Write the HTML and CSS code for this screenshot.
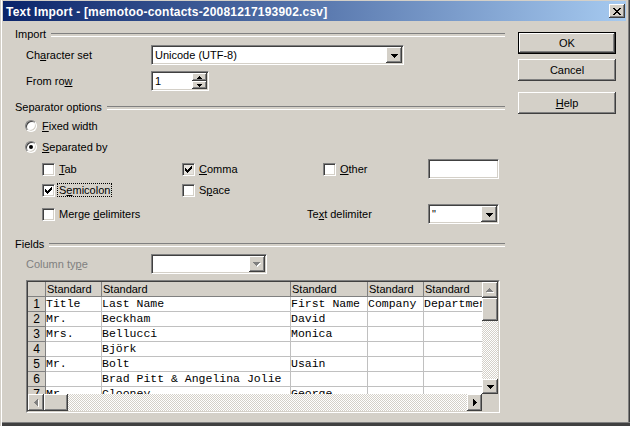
FILE: index.html
```html
<!DOCTYPE html>
<html>
<head>
<meta charset="utf-8">
<title>Text Import</title>
<link rel="stylesheet" href="styles.css">
</head>
<body>
<div class="window">
  <div class="titlebar">
    <span class="title">Text Import - [memotoo-contacts-20081217193902.csv]</span>
    <span class="cap-btn"><svg width="8" height="7" viewBox="0 0 8 7"><path d="M0 0h2v1h-2z M6 0h2v1h-2z M1 1h2v1h-2z M5 1h2v1h-2z M2 2h4v1h-4z M3 3h2v1h-2z M2 4h4v1h-4z M1 5h2v1h-2z M5 5h2v1h-2z M0 6h2v1h-2z M6 6h2v1h-2z"/></svg></span>
  </div>
  <div class="client">
    <div class="main">
      <div class="ghead g-import"><span>Import</span></div>
      <div class="row r-charset">
        <span class="lbl">Ch<u>a</u>racter set</span>
        <div class="field combo combo-charset">
          <span class="combo-text">Unicode (UTF-8)</span>
          <span class="drop"><svg width="7" height="4" viewBox="0 0 7 4"><path d="M0 0h7v1h-1v1h-1v1h-1v1h-1v-1h-1v-1h-1v-1h-1z"/></svg></span>
        </div>
      </div>
      <div class="row r-from">
        <span class="lbl">From ro<u>w</u></span>
        <div class="field spin">
          <span class="combo-text">1</span>
          <span class="spin-btns">
            <span class="spin-btn"><svg width="5" height="3" viewBox="0 0 5 3"><path d="M2 0h1v1h1v1h1v1h-5v-1h1v-1h1z"/></svg></span>
            <span class="spin-btn"><svg width="5" height="3" viewBox="0 0 5 3"><path d="M0 0h5v1h-1v1h-1v1h-1v-1h-1v-1h-1z"/></svg></span>
          </span>
        </div>
      </div>

      <div class="ghead g-sep"><span>Separator options</span></div>
      <div class="row r-fixed">
        <span class="radio"></span><span class="opt-text"><u>F</u>ixed width</span>
      </div>
      <div class="row r-sepby">
        <span class="radio on"></span><span class="opt-text"><u>S</u>eparated by</span>
      </div>
      <div class="row r-checks1 indent">
        <div class="cell c1"><span class="check"></span><span class="opt-text2"><u>T</u>ab</span></div>
        <div class="cell c2"><span class="check on hot"><svg width="7" height="7" viewBox="0 0 7 7"><path d="M6 0h1v1h-1z M5 1h2v1h-2z M0 2h1v1h-1z M4 2h3v1h-3z M0 3h2v1h-2z M3 3h3v1h-3z M0 4h5v1h-5z M1 5h3v1h-3z M2 6h1v1h-1z"/></svg></span><span class="opt-text2"><u>C</u>omma</span></div>
        <div class="cell c3"><span class="check"></span><span class="opt-text2"><u>O</u>ther</span></div>
        <div class="field textbox"></div>
      </div>
      <div class="row r-checks2 indent">
        <div class="cell c1"><span class="check on"><svg width="7" height="7" viewBox="0 0 7 7"><path d="M6 0h1v1h-1z M5 1h2v1h-2z M0 2h1v1h-1z M4 2h3v1h-3z M0 3h2v1h-2z M3 3h3v1h-3z M0 4h5v1h-5z M1 5h3v1h-3z M2 6h1v1h-1z"/></svg></span><span class="opt-text2 focus">S<u>e</u>micolon</span></div>
        <div class="cell c2"><span class="check"></span><span class="opt-text2">S<u>p</u>ace</span></div>
      </div>
      <div class="row r-merge indent">
        <div class="cell c-merge"><span class="check"></span><span class="opt-text2">Merge <u>d</u>elimiters</span></div>
        <span class="delim-lbl">Te<u>x</u>t delimiter</span>
        <div class="field combo combo-delim">
          <span class="combo-text">"</span>
          <span class="drop"><svg width="7" height="4" viewBox="0 0 7 4"><path d="M0 0h7v1h-1v1h-1v1h-1v1h-1v-1h-1v-1h-1v-1h-1z"/></svg></span>
        </div>
      </div>

      <div class="ghead g-fields"><span>Fields</span></div>
      <div class="row r-coltype">
        <span class="lbl disabled">Column ty<u>p</u>e</span>
        <div class="field combo combo-coltype">
          <span class="combo-text"></span>
          <span class="drop"><svg width="8" height="5" viewBox="0 0 8 5"><path class="shadow" d="M1 1h7v1h-1v1h-1v1h-1v1h-1v-1h-1v-1h-1v-1h-1z"/><path class="gray" d="M0 0h7v1h-1v1h-1v1h-1v1h-1v-1h-1v-1h-1v-1h-1z"/></svg></span>
        </div>
      </div>

      <div class="grid-frame">
        <div class="grid-inner">
          <div class="grid-top">
            <div class="grid-view">
              <div class="grid">
                <div class="hd rn"></div><div class="hd">Standard</div><div class="hd">Standard</div><div class="hd">Standard</div><div class="hd">Standard</div><div class="hd">Standard</div>
                <div class="rn">1</div><div class="td">Title</div><div class="td">Last Name</div><div class="td">First Name</div><div class="td">Company</div><div class="td">Department</div>
                <div class="rn">2</div><div class="td">Mr.</div><div class="td">Beckham</div><div class="td">David</div><div class="td"></div><div class="td"></div>
                <div class="rn">3</div><div class="td">Mrs.</div><div class="td">Bellucci</div><div class="td">Monica</div><div class="td"></div><div class="td"></div>
                <div class="rn">4</div><div class="td"></div><div class="td">Björk</div><div class="td"></div><div class="td"></div><div class="td"></div>
                <div class="rn">5</div><div class="td">Mr.</div><div class="td">Bolt</div><div class="td">Usain</div><div class="td"></div><div class="td"></div>
                <div class="rn">6</div><div class="td"></div><div class="td">Brad Pitt &amp; Angelina Jolie</div><div class="td"></div><div class="td"></div><div class="td"></div>
                <div class="rn">7</div><div class="td">Mr.</div><div class="td">Clooney</div><div class="td">George</div><div class="td"></div><div class="td"></div>
              </div>
            </div>
            <div class="vscroll">
              <span class="sbtn sbtn-v"><svg width="8" height="5" viewBox="0 0 8 5"><path class="shadow" d="M4 1h1v1h1v1h1v1h1v1h-7v-1h1v-1h1v-1h1z"/><path class="gray" d="M3 0h1v1h1v1h1v1h1v1h-7v-1h1v-1h1v-1h1z"/></svg></span>
              <span class="thumb thumb-v"></span>
              <span class="track"></span>
              <span class="sbtn sbtn-v"><svg width="7" height="4" viewBox="0 0 7 4"><path d="M0 0h7v1h-1v1h-1v1h-1v1h-1v-1h-1v-1h-1v-1h-1z"/></svg></span>
            </div>
          </div>
          <div class="grid-bottom">
            <div class="hscroll">
              <span class="sbtn sbtn-h"><svg width="5" height="8" viewBox="0 0 5 8"><path class="shadow" d="M4 1h1v7h-1v-1h-1v-1h-1v-1h-1v-1h1v-1h1v-1h1z"/><path class="gray" d="M3 0h1v7h-1v-1h-1v-1h-1v-1h-1v-1h1v-1h1v-1h1z"/></svg></span>
              <span class="thumb thumb-h"></span>
              <span class="track"></span>
              <span class="sbtn sbtn-h"><svg width="4" height="7" viewBox="0 0 4 7"><path d="M0 0h1v1h1v1h1v1h1v1h-1v1h-1v1h-1v1h-1z"/></svg></span>
            </div>
            <div class="corner"></div>
          </div>
        </div>
      </div>
    </div>

    <div class="buttons">
      <div class="btn btn-default">OK</div>
      <div class="btn btn-cancel">Cancel</div>
      <div class="btn btn-help"><span><u>H</u>elp</span></div>
    </div>
  </div>
</div>
</body>
</html>
```

FILE: styles.css
```css
* { box-sizing: border-box; }

body {
  margin: 0;
  background: #d4d0c8;
  font-family: "Liberation Sans", Arial, sans-serif;
  font-size: 11px;
  color: #000;
}

u { text-decoration: underline; text-underline-offset: 1px; }

svg { display: block; fill: #000; shape-rendering: crispEdges; }
svg .gray { fill: #808080; }
svg .shadow { fill: #fff; }

.window {
  width: 630px;
  height: 426px;
  padding: 1px 4px 4px 3px;
  background: #d4d0c8;
  box-shadow:
    inset 1px 0 #d4d0c8,
    inset 2px 0 #fff,
    inset 0 -3px #404040,
    inset 0 -4px #808080,
    inset -1px 0 #404040,
    inset -2px 0 #808080;
}

/* ---------- title bar ---------- */
.titlebar {
  height: 20px;
  display: flex;
  align-items: center;
  padding-left: 3px;
  background: linear-gradient(90deg, #0a246a 0%, #a6caf0 100%);
  color: #fff;
  font-weight: bold;
}
.title { font-size: 12px; letter-spacing: 0.2px; padding-top: 1px; }

.cap-btn {
  margin-left: auto;
  margin-right: 1px;
  width: 16px;
  height: 14px;
  display: flex;
  align-items: center;
  justify-content: center;
  background: #d4d0c8;
  box-shadow: inset -1px -1px #404040, inset 1px 1px #fff, inset -2px -2px #808080;
}

/* ---------- client ---------- */
.client { display: flex; padding-left: 12px; }
.main { width: 490px; }

.ghead {
  display: flex;
  align-items: center;
  height: 14px;
}
.ghead::after {
  content: "";
  flex: 1;
  height: 2px;
  margin-left: 5px;
  margin-top: 2px;
  border-top: 1px solid #808080;
  border-bottom: 1px solid #fff;
}
.g-import { margin-top: 6px; }
.g-sep { margin-top: 9px; }
.g-fields { margin-top: 13px; }

.row { display: flex; align-items: center; height: 20px; }
.r-charset { margin-top: 4px; }
.r-from { margin-top: 6px; }
.r-fixed { margin-top: 2px; }
.r-sepby { margin-top: 1px; }
.r-checks1 { margin-top: 2px; }
.r-checks2 { margin-top: 1px; }
.r-merge { margin-top: 4px; }
.r-coltype { margin-top: 3px; }

.lbl { width: 136px; padding-left: 11px; }
.disabled { color: #808080; }

/* sunken fields */
.field {
  height: 20px;
  display: flex;
  align-items: center;
  background: #fff;
  padding: 2px;
  border: 1px solid;
  border-color: #808080 #fff #fff #808080;
  box-shadow: inset 1px 1px #404040, inset -1px -1px #d4d0c8;
}
.combo-text { flex: 1; padding-left: 1px; white-space: nowrap; overflow: hidden; }
.combo-charset { width: 253px; }
.combo-delim { width: 71px; }
.combo-coltype { width: 116px; }
.combo { padding: 1px 1px 1px 2px; }

.drop, .spin-btn, .sbtn {
  display: flex;
  align-items: center;
  justify-content: center;
  background: #d4d0c8;
  box-shadow: inset -1px -1px #404040, inset 1px 1px #fff, inset -2px -2px #808080;
}
.drop { width: 16px; height: 16px; }
.drop svg { margin-top: 1px; }

.spin { width: 58px; padding: 1px 1px 1px 2px; }
.spin-btns { display: flex; flex-direction: column; width: 15px; height: 16px; }
.spin-btn { height: 8px; }

.textbox { width: 71px; }

/* radios & checks */
.radio {
  width: 12px;
  height: 12px;
  margin-left: 10px;
  border-radius: 50%;
  background: #fff;
  border: 1px solid;
  border-color: #808080 #fff #fff #808080;
  box-shadow: inset 1px 1px #404040, inset -1px -1px #d4d0c8;
  display: flex;
  align-items: center;
  justify-content: center;
}
.radio.on::after {
  content: "";
  width: 4px;
  height: 4px;
  border-radius: 50%;
  background: #000;
}
.opt-text { margin-left: 5px; }

.indent { padding-left: 27px; }
.cell { display: flex; align-items: center; }
.c1 { width: 140px; }
.c2 { width: 141px; }
.c3 { width: 105px; }
.c-merge { width: 265px; }
.delim-lbl { width: 121px; }

.check {
  width: 13px;
  height: 13px;
  background: #fff;
  border: 1px solid;
  border-color: #808080 #fff #fff #808080;
  box-shadow: inset 1px 1px #404040, inset -1px -1px #d4d0c8;
  display: flex;
  align-items: center;
  justify-content: center;
}
.check.hot { background: #e6e3de; }
.opt-text2 { margin-left: 4px; }
.focus {
  margin-left: 2px;
  padding: 0 1px;
  line-height: 12px;
  border: 1px dotted #000;
}

/* ---------- grid ---------- */
.grid-frame {
  margin-top: 6px;
  margin-left: 11px;
  width: 474px;
  height: 133px;
  border: 1px solid;
  border-color: #808080 #fff #fff #808080;
}
.grid-inner {
  height: 100%;
  border: 1px solid;
  border-color: #404040 #d4d0c8 #d4d0c8 #404040;
  display: flex;
  flex-direction: column;
}
.grid-top { display: flex; height: 112px; }
.grid-view { width: 454px; height: 112px; overflow: hidden; background: #fff; }
.grid {
  display: grid;
  grid-template-columns: 18px 56px 189px 77px 56px 100px;
  grid-auto-rows: 15px;
  width: 496px;
}
.grid > div {
  white-space: nowrap;
  overflow: hidden;
  border-right: 1px solid #c0c0c0;
  border-bottom: 1px solid #c0c0c0;
  line-height: 14px;
}
.grid .hd {
  background: #d4d0c8;
  border-right-color: #808080;
  border-bottom-color: #808080;
  padding-left: 1px;
}
.grid .rn {
  background: #d4d0c8;
  border-right-color: #808080;
  border-bottom-color: #808080;
  text-align: center;
  font-size: 12px;
}
.grid .td {
  font-family: "Liberation Mono", "Courier New", monospace;
  font-size: 11.5px;
  padding-left: 0;
}

.vscroll { width: 16px; display: flex; flex-direction: column; }
.sbtn-v { height: 16px; flex: none; }
.sbtn-v:last-child { height: 15px; }
.thumb {
  background: #d4d0c8;
  box-shadow: inset -1px -1px #404040, inset 1px 1px #fff, inset -2px -2px #808080;
  flex: none;
}
.thumb-v { height: 23px; }
.track {
  flex: 1;
  background: repeating-conic-gradient(#fff 0 25%, #d4d0c8 0 50%) 0 0 / 2px 2px;
}

.grid-bottom { display: flex; height: 17px; }
.hscroll { width: 454px; display: flex; }
.sbtn-h { width: 16px; flex: none; }
.sbtn-h:last-child { width: 15px; }
.thumb-h { width: 24px; }
.corner { flex: 1; background: #d4d0c8; }

/* ---------- buttons ---------- */
.buttons {
  margin-left: 13px;
  width: 98px;
  display: flex;
  flex-direction: column;
  padding-top: 11px;
}
.btn {
  height: 22px;
  display: flex;
  align-items: center;
  justify-content: center;
  background: #d4d0c8;
  box-shadow: inset -1px -1px #404040, inset 1px 1px #fff, inset -2px -2px #808080;
}
.btn-default {
  border: 1px solid #000;
}
.btn-cancel { margin-top: 5px; }
.btn-help { margin-top: 11px; }
```
